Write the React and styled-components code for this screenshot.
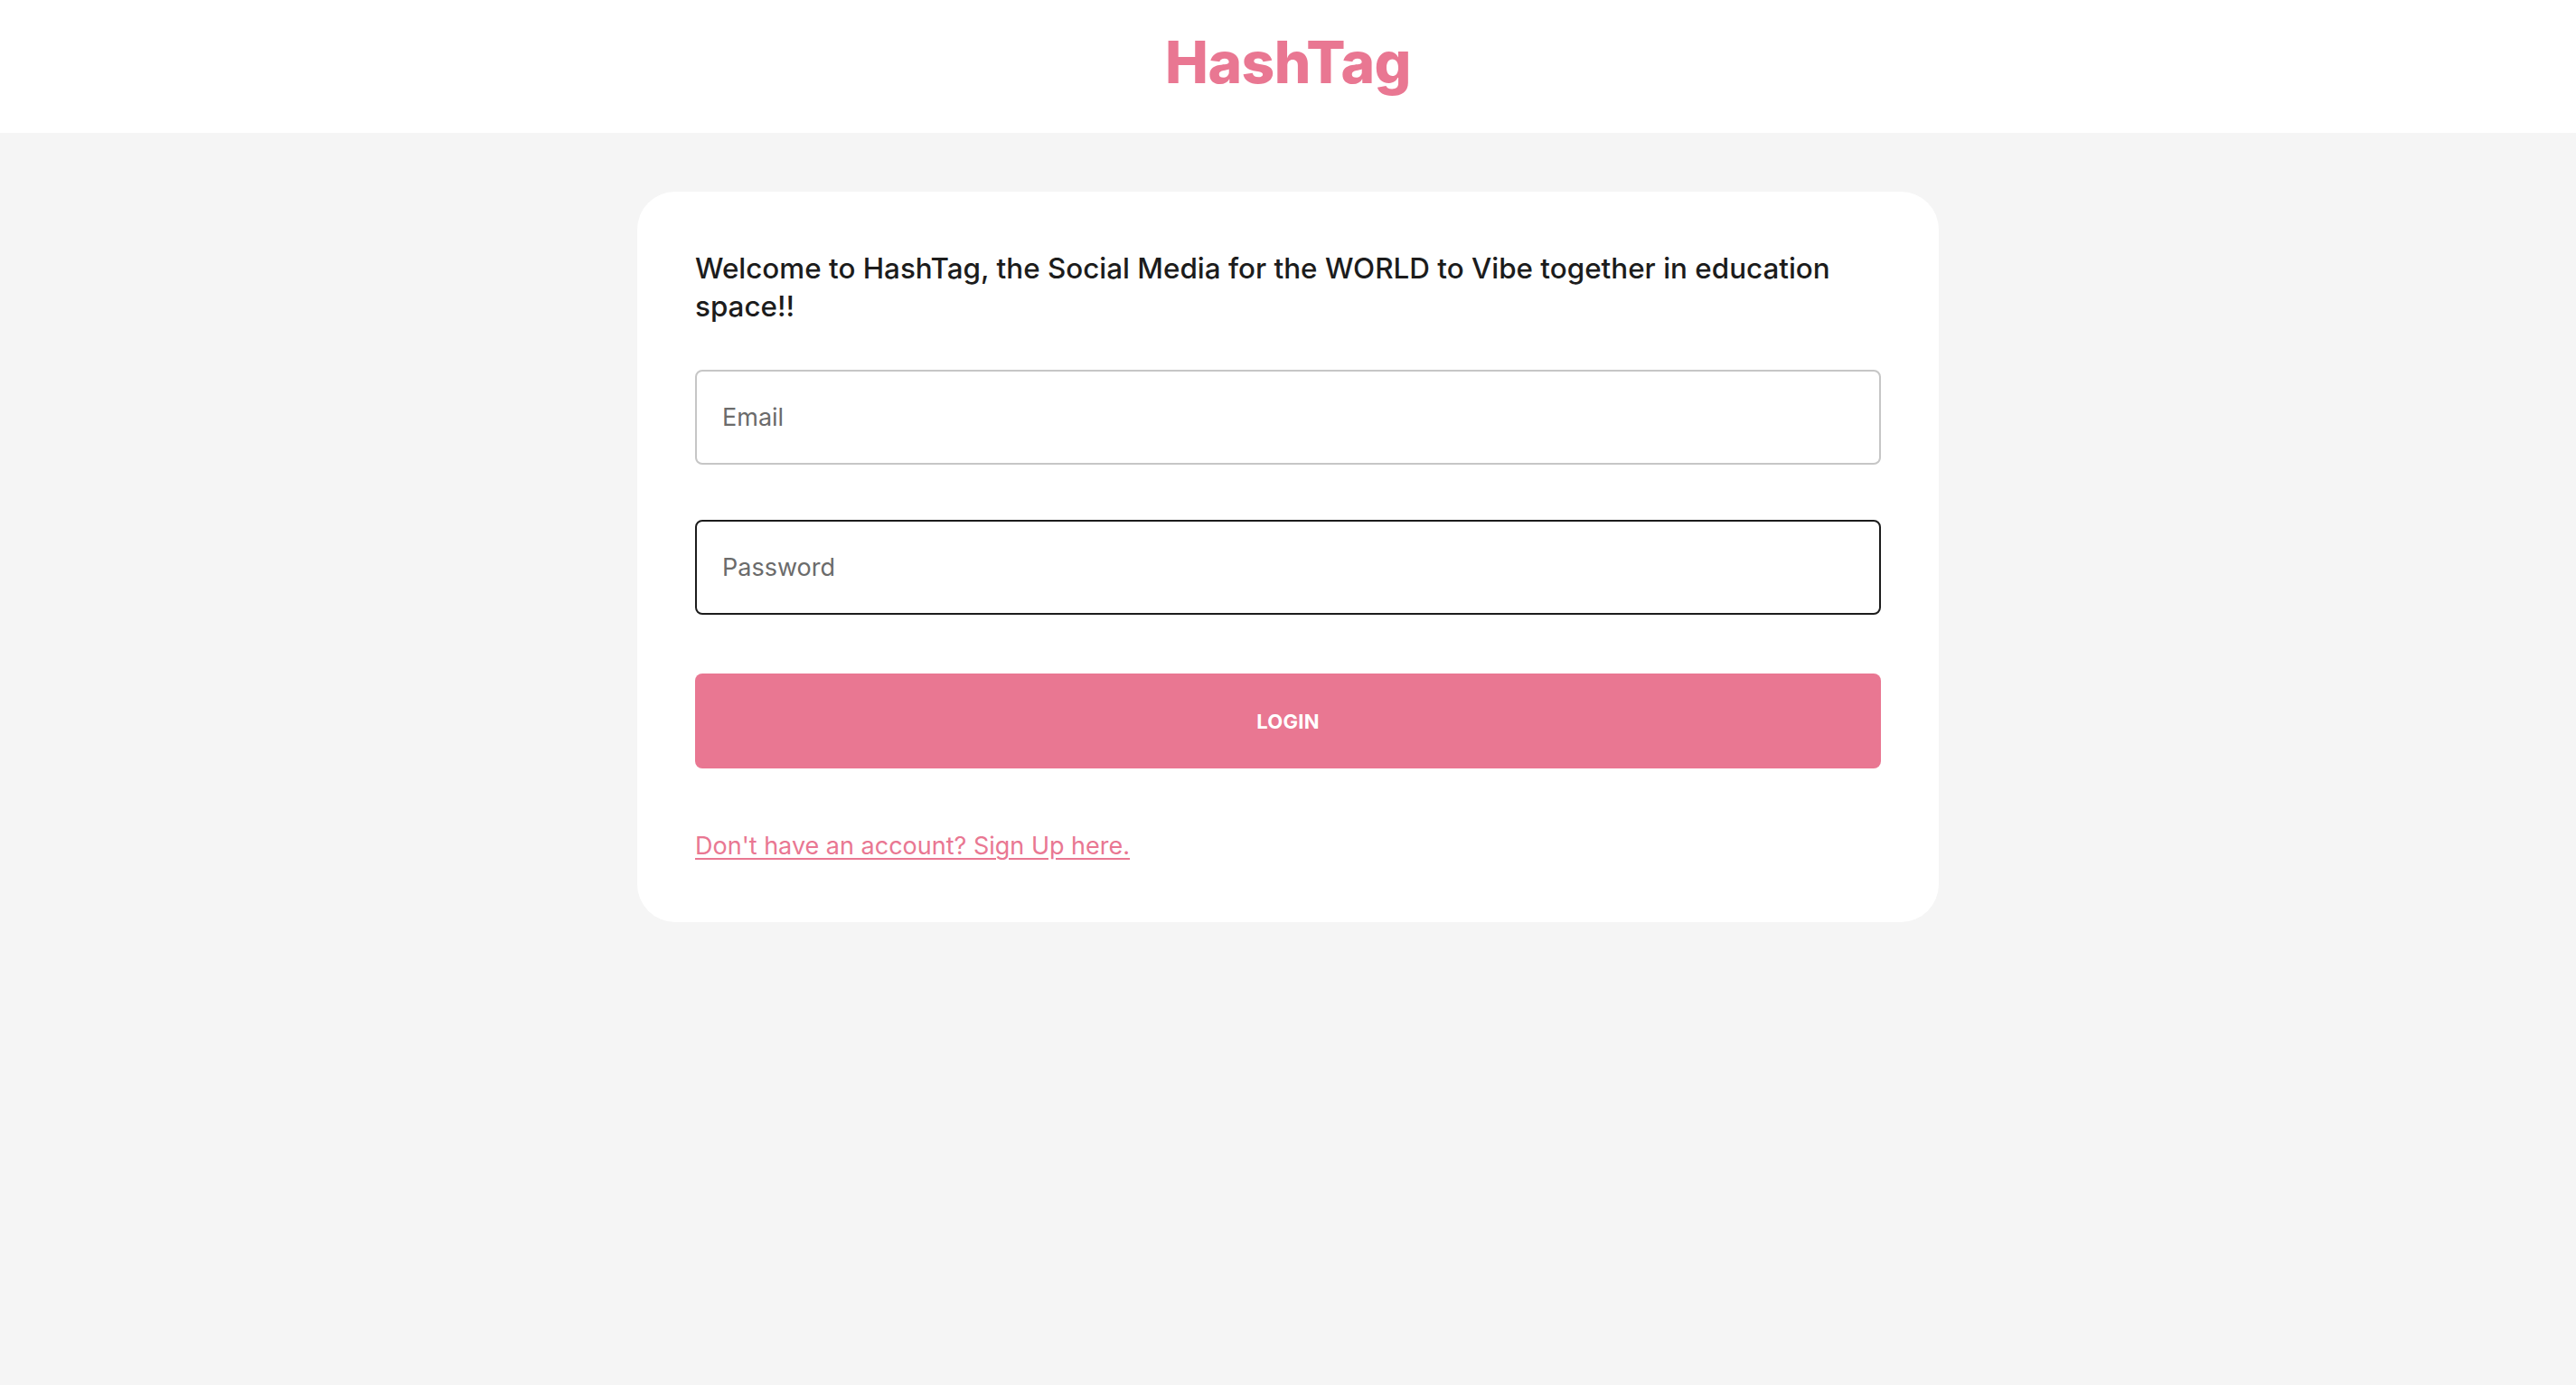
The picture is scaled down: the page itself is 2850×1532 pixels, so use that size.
import React from "react";
import styled, { createGlobalStyle } from "styled-components";

const pink = "#e97792";

const GlobalStyle = createGlobalStyle`
  * {
    box-sizing: border-box;
  }
  html, body {
    margin: 0;
    padding: 0;
    background: #f5f5f5;
    font-family: Inter, "Open Sans", sans-serif;
  }
`;

const Page = styled.div`
  min-height: 100vh;
  background: #f5f5f5;
`;

const Header = styled.header`
  height: 147px;
  background: #ffffff;
  display: flex;
  align-items: center;
  justify-content: center;
`;

const Logo = styled.h1`
  margin: 0;
  padding-bottom: 10px;
  font-size: 64px;
  font-weight: 800;
  letter-spacing: -0.5px;
  color: ${pink};
`;

const Card = styled.main`
  width: 1440px;
  margin: 65px auto 0;
  padding: 64px 64px 66px;
  background: #ffffff;
  border-radius: 42px;
  display: flex;
  flex-direction: column;
`;

const Welcome = styled.h2`
  margin: 0 0 49px;
  font-size: 31.4px;
  line-height: 42px;
  font-weight: 500;
  color: #1c1c1c;
`;

const Input = styled.input`
  width: 100%;
  height: 105px;
  padding: 0 28px;
  margin-bottom: ${(props) => props.gap}px;
  font-family: inherit;
  font-size: 27px;
  color: #222;
  background: #fff;
  border: ${(props) =>
    props.active ? "2px solid #1c1c1c" : "2px solid #c6c6c6"};
  border-radius: 8px;
  outline: none;

  &::placeholder {
    color: #6b6b6b;
  }
`;

const LoginButton = styled.button`
  width: 100%;
  height: 105px;
  border: none;
  border-radius: 8px;
  background: ${pink};
  color: #ffffff;
  font-family: inherit;
  font-size: 22px;
  font-weight: 700;
  letter-spacing: 0.3px;
  cursor: pointer;
`;

const SignUp = styled.a`
  margin-top: 68px;
  align-self: flex-start;
  font-size: 27px;
  line-height: 36px;
  color: ${pink};
  text-decoration: underline;
  text-underline-offset: 4px;
  cursor: pointer;
`;

export default function App() {
  return (
    <Page>
      <GlobalStyle />
      <Header>
        <Logo>HashTag</Logo>
      </Header>
      <Card>
        <Welcome>
          Welcome to HashTag, the Social Media for the WORLD to Vibe together
          in education space!!
        </Welcome>
        <Input type="email" placeholder="Email" gap={61} />
        <Input type="password" placeholder="Password" gap={65} active />
        <LoginButton>LOGIN</LoginButton>
        <SignUp href="#">Don't have an account? Sign Up here.</SignUp>
      </Card>
    </Page>
  );
}
